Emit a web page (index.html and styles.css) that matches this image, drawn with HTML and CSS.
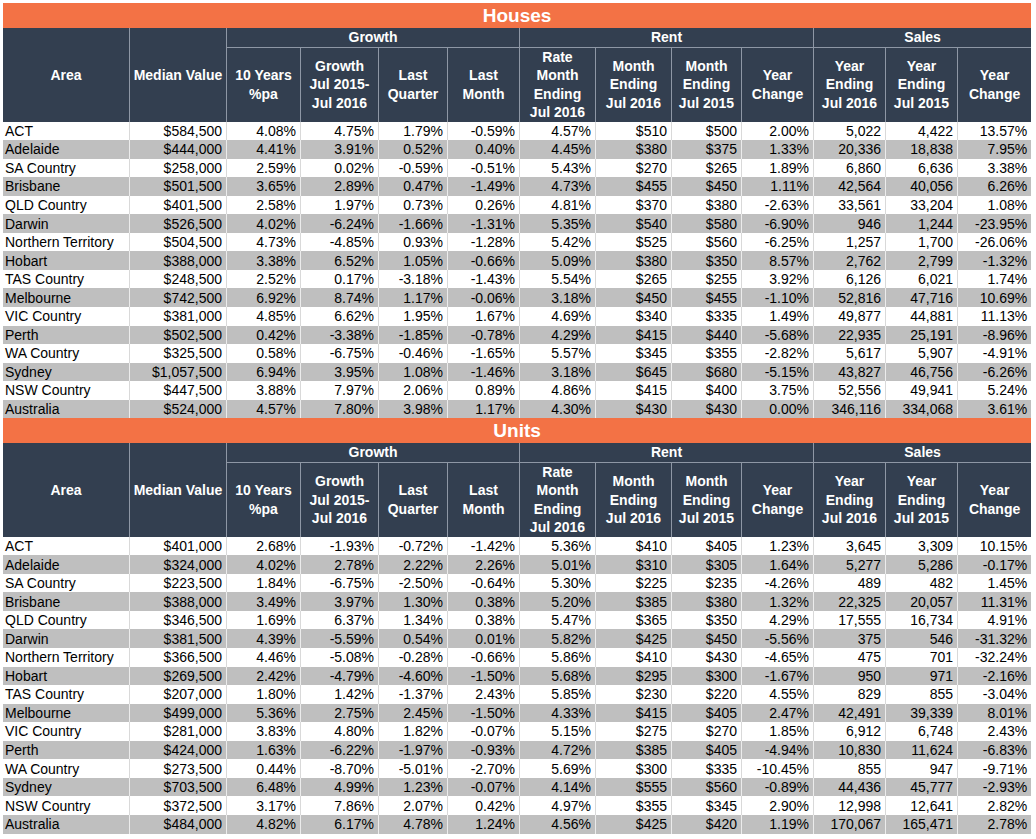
FILE: index.html
```html
<!DOCTYPE html>
<html lang="en">
<head>
<meta charset="utf-8">
<title>Houses and Units</title>
<link rel="stylesheet" href="styles.css">
</head>
<body>
<div class="page">
<table class="grid">
<colgroup>
<col class="c-area"><col class="c-med"><col class="c-10y"><col class="c-gr"><col class="c-lq"><col class="c-lm"><col class="c-rate"><col class="c-m16"><col class="c-m15"><col class="c-yc"><col class="c-y16"><col class="c-y15"><col class="c-syc">
</colgroup>
<thead>
<tr class="title"><th colspan="13">Houses</th></tr>
<tr class="grp"><th rowspan="2">Area</th><th rowspan="2">Median Value</th><th colspan="4">Growth</th><th colspan="4">Rent</th><th colspan="3" class="last">Sales</th></tr>
<tr class="sub"><th>10 Years<br>%pa</th><th>Growth<br>Jul 2015-<br>Jul 2016</th><th>Last<br>Quarter</th><th>Last<br>Month</th><th>Rate<br>Month<br>Ending<br>Jul 2016</th><th>Month<br>Ending<br>Jul 2016</th><th>Month<br>Ending<br>Jul 2015</th><th>Year<br>Change</th><th>Year<br>Ending<br>Jul 2016</th><th>Year<br>Ending<br>Jul 2015</th><th class="last">Year<br>Change</th></tr>
</thead>
<tbody>
<tr><td>ACT</td><td>$584,500</td><td>4.08%</td><td>4.75%</td><td>1.79%</td><td>-0.59%</td><td>4.57%</td><td>$510</td><td>$500</td><td>2.00%</td><td>5,022</td><td>4,422</td><td>13.57%</td></tr>
<tr><td>Adelaide</td><td>$444,000</td><td>4.41%</td><td>3.91%</td><td>0.52%</td><td>0.40%</td><td>4.45%</td><td>$380</td><td>$375</td><td>1.33%</td><td>20,336</td><td>18,838</td><td>7.95%</td></tr>
<tr><td>SA Country</td><td>$258,000</td><td>2.59%</td><td>0.02%</td><td>-0.59%</td><td>-0.51%</td><td>5.43%</td><td>$270</td><td>$265</td><td>1.89%</td><td>6,860</td><td>6,636</td><td>3.38%</td></tr>
<tr><td>Brisbane</td><td>$501,500</td><td>3.65%</td><td>2.89%</td><td>0.47%</td><td>-1.49%</td><td>4.73%</td><td>$455</td><td>$450</td><td>1.11%</td><td>42,564</td><td>40,056</td><td>6.26%</td></tr>
<tr><td>QLD Country</td><td>$401,500</td><td>2.58%</td><td>1.97%</td><td>0.73%</td><td>0.26%</td><td>4.81%</td><td>$370</td><td>$380</td><td>-2.63%</td><td>33,561</td><td>33,204</td><td>1.08%</td></tr>
<tr><td>Darwin</td><td>$526,500</td><td>4.02%</td><td>-6.24%</td><td>-1.66%</td><td>-1.31%</td><td>5.35%</td><td>$540</td><td>$580</td><td>-6.90%</td><td>946</td><td>1,244</td><td>-23.95%</td></tr>
<tr><td>Northern Territory</td><td>$504,500</td><td>4.73%</td><td>-4.85%</td><td>0.93%</td><td>-1.28%</td><td>5.42%</td><td>$525</td><td>$560</td><td>-6.25%</td><td>1,257</td><td>1,700</td><td>-26.06%</td></tr>
<tr><td>Hobart</td><td>$388,000</td><td>3.38%</td><td>6.52%</td><td>1.05%</td><td>-0.66%</td><td>5.09%</td><td>$380</td><td>$350</td><td>8.57%</td><td>2,762</td><td>2,799</td><td>-1.32%</td></tr>
<tr><td>TAS Country</td><td>$248,500</td><td>2.52%</td><td>0.17%</td><td>-3.18%</td><td>-1.43%</td><td>5.54%</td><td>$265</td><td>$255</td><td>3.92%</td><td>6,126</td><td>6,021</td><td>1.74%</td></tr>
<tr><td>Melbourne</td><td>$742,500</td><td>6.92%</td><td>8.74%</td><td>1.17%</td><td>-0.06%</td><td>3.18%</td><td>$450</td><td>$455</td><td>-1.10%</td><td>52,816</td><td>47,716</td><td>10.69%</td></tr>
<tr><td>VIC Country</td><td>$381,000</td><td>4.85%</td><td>6.62%</td><td>1.95%</td><td>1.67%</td><td>4.69%</td><td>$340</td><td>$335</td><td>1.49%</td><td>49,877</td><td>44,881</td><td>11.13%</td></tr>
<tr><td>Perth</td><td>$502,500</td><td>0.42%</td><td>-3.38%</td><td>-1.85%</td><td>-0.78%</td><td>4.29%</td><td>$415</td><td>$440</td><td>-5.68%</td><td>22,935</td><td>25,191</td><td>-8.96%</td></tr>
<tr><td>WA Country</td><td>$325,500</td><td>0.58%</td><td>-6.75%</td><td>-0.46%</td><td>-1.65%</td><td>5.57%</td><td>$345</td><td>$355</td><td>-2.82%</td><td>5,617</td><td>5,907</td><td>-4.91%</td></tr>
<tr><td>Sydney</td><td>$1,057,500</td><td>6.94%</td><td>3.95%</td><td>1.08%</td><td>-1.46%</td><td>3.18%</td><td>$645</td><td>$680</td><td>-5.15%</td><td>43,827</td><td>46,756</td><td>-6.26%</td></tr>
<tr><td>NSW Country</td><td>$447,500</td><td>3.88%</td><td>7.97%</td><td>2.06%</td><td>0.89%</td><td>4.86%</td><td>$415</td><td>$400</td><td>3.75%</td><td>52,556</td><td>49,941</td><td>5.24%</td></tr>
<tr><td>Australia</td><td>$524,000</td><td>4.57%</td><td>7.80%</td><td>3.98%</td><td>1.17%</td><td>4.30%</td><td>$430</td><td>$430</td><td>0.00%</td><td>346,116</td><td>334,068</td><td>3.61%</td></tr>
</tbody>
</table>

<table class="grid">
<colgroup>
<col class="c-area"><col class="c-med"><col class="c-10y"><col class="c-gr"><col class="c-lq"><col class="c-lm"><col class="c-rate"><col class="c-m16"><col class="c-m15"><col class="c-yc"><col class="c-y16"><col class="c-y15"><col class="c-syc">
</colgroup>
<thead>
<tr class="title"><th colspan="13">Units</th></tr>
<tr class="grp"><th rowspan="2">Area</th><th rowspan="2">Median Value</th><th colspan="4">Growth</th><th colspan="4">Rent</th><th colspan="3" class="last">Sales</th></tr>
<tr class="sub"><th>10 Years<br>%pa</th><th>Growth<br>Jul 2015-<br>Jul 2016</th><th>Last<br>Quarter</th><th>Last<br>Month</th><th>Rate<br>Month<br>Ending<br>Jul 2016</th><th>Month<br>Ending<br>Jul 2016</th><th>Month<br>Ending<br>Jul 2015</th><th>Year<br>Change</th><th>Year<br>Ending<br>Jul 2016</th><th>Year<br>Ending<br>Jul 2015</th><th class="last">Year<br>Change</th></tr>
</thead>
<tbody>
<tr><td>ACT</td><td>$401,000</td><td>2.68%</td><td>-1.93%</td><td>-0.72%</td><td>-1.42%</td><td>5.36%</td><td>$410</td><td>$405</td><td>1.23%</td><td>3,645</td><td>3,309</td><td>10.15%</td></tr>
<tr><td>Adelaide</td><td>$324,000</td><td>4.02%</td><td>2.78%</td><td>2.22%</td><td>2.26%</td><td>5.01%</td><td>$310</td><td>$305</td><td>1.64%</td><td>5,277</td><td>5,286</td><td>-0.17%</td></tr>
<tr><td>SA Country</td><td>$223,500</td><td>1.84%</td><td>-6.75%</td><td>-2.50%</td><td>-0.64%</td><td>5.30%</td><td>$225</td><td>$235</td><td>-4.26%</td><td>489</td><td>482</td><td>1.45%</td></tr>
<tr><td>Brisbane</td><td>$388,000</td><td>3.49%</td><td>3.97%</td><td>1.30%</td><td>0.38%</td><td>5.20%</td><td>$385</td><td>$380</td><td>1.32%</td><td>22,325</td><td>20,057</td><td>11.31%</td></tr>
<tr><td>QLD Country</td><td>$346,500</td><td>1.69%</td><td>6.37%</td><td>1.34%</td><td>0.38%</td><td>5.47%</td><td>$365</td><td>$350</td><td>4.29%</td><td>17,555</td><td>16,734</td><td>4.91%</td></tr>
<tr><td>Darwin</td><td>$381,500</td><td>4.39%</td><td>-5.59%</td><td>0.54%</td><td>0.01%</td><td>5.82%</td><td>$425</td><td>$450</td><td>-5.56%</td><td>375</td><td>546</td><td>-31.32%</td></tr>
<tr><td>Northern Territory</td><td>$366,500</td><td>4.46%</td><td>-5.08%</td><td>-0.28%</td><td>-0.66%</td><td>5.86%</td><td>$410</td><td>$430</td><td>-4.65%</td><td>475</td><td>701</td><td>-32.24%</td></tr>
<tr><td>Hobart</td><td>$269,500</td><td>2.42%</td><td>-4.79%</td><td>-4.60%</td><td>-1.50%</td><td>5.68%</td><td>$295</td><td>$300</td><td>-1.67%</td><td>950</td><td>971</td><td>-2.16%</td></tr>
<tr><td>TAS Country</td><td>$207,000</td><td>1.80%</td><td>1.42%</td><td>-1.37%</td><td>2.43%</td><td>5.85%</td><td>$230</td><td>$220</td><td>4.55%</td><td>829</td><td>855</td><td>-3.04%</td></tr>
<tr><td>Melbourne</td><td>$499,000</td><td>5.36%</td><td>2.75%</td><td>2.45%</td><td>-1.50%</td><td>4.33%</td><td>$415</td><td>$405</td><td>2.47%</td><td>42,491</td><td>39,339</td><td>8.01%</td></tr>
<tr><td>VIC Country</td><td>$281,000</td><td>3.83%</td><td>4.80%</td><td>1.82%</td><td>-0.07%</td><td>5.15%</td><td>$275</td><td>$270</td><td>1.85%</td><td>6,912</td><td>6,748</td><td>2.43%</td></tr>
<tr><td>Perth</td><td>$424,000</td><td>1.63%</td><td>-6.22%</td><td>-1.97%</td><td>-0.93%</td><td>4.72%</td><td>$385</td><td>$405</td><td>-4.94%</td><td>10,830</td><td>11,624</td><td>-6.83%</td></tr>
<tr><td>WA Country</td><td>$273,500</td><td>0.44%</td><td>-8.70%</td><td>-5.01%</td><td>-2.70%</td><td>5.69%</td><td>$300</td><td>$335</td><td>-10.45%</td><td>855</td><td>947</td><td>-9.71%</td></tr>
<tr><td>Sydney</td><td>$703,500</td><td>6.48%</td><td>4.99%</td><td>1.23%</td><td>-0.07%</td><td>4.14%</td><td>$555</td><td>$560</td><td>-0.89%</td><td>44,436</td><td>45,777</td><td>-2.93%</td></tr>
<tr><td>NSW Country</td><td>$372,500</td><td>3.17%</td><td>7.86%</td><td>2.07%</td><td>0.42%</td><td>4.97%</td><td>$355</td><td>$345</td><td>2.90%</td><td>12,998</td><td>12,641</td><td>2.82%</td></tr>
<tr><td>Australia</td><td>$484,000</td><td>4.82%</td><td>6.17%</td><td>4.78%</td><td>1.24%</td><td>4.56%</td><td>$425</td><td>$420</td><td>1.19%</td><td>170,067</td><td>165,471</td><td>2.78%</td></tr>
</tbody>
</table>
</div>
</body>
</html>
```

FILE: styles.css
```css
html, body {
  margin: 0;
  padding: 0;
  background: #ffffff;
}

body {
  font-family: "Liberation Sans", Arial, sans-serif;
  color: #000000;
}

.page {
  padding: 3px 0 0 3px;
}

.grid {
  border-collapse: separate;
  border-spacing: 0;
  table-layout: fixed;
  width: 1028px;
}

.c-area { width: 127px; }
.c-med { width: 97px; }
.c-10y { width: 74px; }
.c-gr { width: 78px; }
.c-lq { width: 69px; }
.c-lm { width: 72px; }
.c-rate { width: 76px; }
.c-m16 { width: 76px; }
.c-m15 { width: 70px; }
.c-yc { width: 72px; }
.c-y16 { width: 72px; }
.c-y15 { width: 72px; }
.c-syc { width: 73px; }

.title th {
  background: #f37245;
  color: #ffffff;
  font-size: 19px;
  font-weight: bold;
  height: 25px;
  line-height: 25px;
  padding: 0;
  text-align: center;
}

.grp th,
.sub th {
  background: #333f50;
  color: #ffffff;
  font-size: 14px;
  font-weight: bold;
  line-height: 18.5px;
  padding: 0;
  text-align: center;
  vertical-align: middle;
  border-right: 1px solid #8e97a5;
}

.grp th {
  height: 18px;
  border-bottom: 1px solid #8e97a5;
}

.grp th[rowspan] {
  border-bottom: none;
}

.sub th {
  height: 74px;
}

.grp th.last,
.sub th.last {
  border-right: none;
}

.grid td {
  font-size: 14px;
  height: 18.55px;
  line-height: 18px;
  padding: 0 4px 0 0;
  text-align: right;
  white-space: nowrap;
  border-right: 1px solid #d9d9d9;
  background: #ffffff;
}

.grid td:first-child {
  text-align: left;
  padding: 0 0 0 2px;
}

.grid td:last-child {
  border-right: none;
}

.grid tbody tr:nth-child(even) td {
  background: #bfbfbf;
  border-right-color: #ececec;
}

.grid tbody tr:nth-child(even) td:last-child {
  border-right: none;
}
```
